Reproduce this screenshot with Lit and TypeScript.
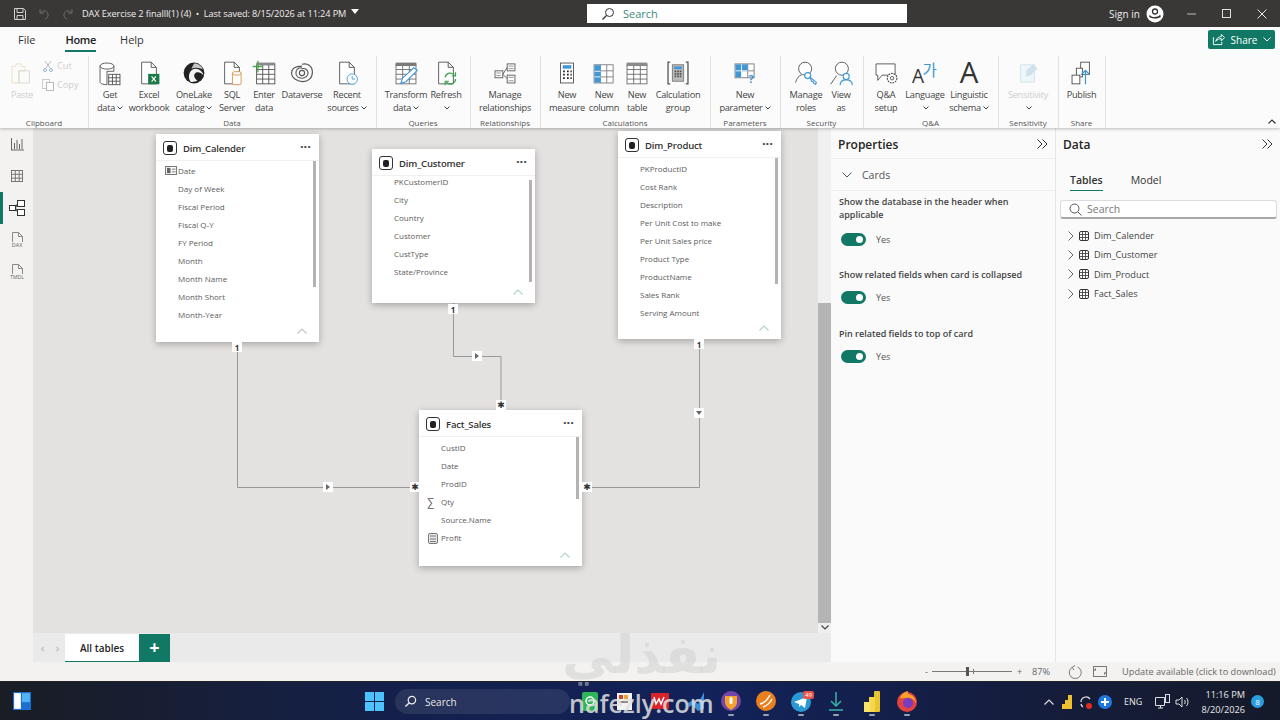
import {LitElement, css, html, svg} from 'lit'
import {customElement} from 'lit/decorators.js'

const S = '#4a4a4a'
const B = '#3f97d6'

// ribbon icons, all on a 30x30 box
const grid = (x: number, y: number, w: number, h: number, cols: number, rows: number, c = S) => 
{
    const lines = []
    for (let i = 1; i < cols; i++) lines.push(svg`<path d="M${x + (w * i) / cols} ${y}v${h}" stroke=${c} fill="none"/>`)
    for (let i = 1; i < rows; i++) lines.push(svg`<path d="M${x} ${y + (h * i) / rows}h${w}" stroke=${c} fill="none"/>`)
    return svg`<rect x=${x} y=${y} width=${w} height=${h} fill="#fff" stroke=${c}/>${lines}`
}
const doc = (c = S) => svg`<path d="M6.5 2.5h11l6 6v19h-17z M17.5 2.5v6h6" fill="#fff" stroke=${c}/>`

const ICONS: Record<string, unknown> = {
    paste: svg`<path d="M3.5 7.5h4l1-3h5l1 3h4v5h-7v14h-8z" fill="none" stroke="#ecdcb8"/><rect x="11.5" y="12.5" width="12" height="14" fill="none" stroke="#d5d5d5"/>`,
    getdata: svg`<path d="M3.5 7v18c0 2 3 3.500 8 3.500V13h8V7" fill="#fff" stroke=${S}/><ellipse cx="11.500" cy="7" rx="8" ry="3.500" fill="#fff" stroke=${S}/>${grid(13.5, 16.5, 13, 12, 3, 3)}`,
    excel: svg`${doc()}<rect x="14" y="16" width="13" height="12" fill="#1b7a45"/><path d="M18 19l5 6m0-6l-5 6" stroke="#fff" stroke-width="1.300"/>`,
    onelake: svg`<circle cx="15" cy="15" r="12" fill="#222"/><path d="M11 25c-4-6-1-15 6-15 5 0 9 5 9 8-3-4-8-5-10-2-2 2 0 6 3 8-3 1-6 2-8 1z" fill="#f4f4f4"/><path d="M15 4c4 0 9 2 10 7-3-2-9-3-13-1z" fill="#fff" opacity=".75"/>`,
    sql: svg`${doc()}<rect x="15.500" y="13.500" width="10" height="15" rx="2" fill="#fff" stroke="#d98a3c"/><path d="M15.500 16c2 2 8 2 10 0" fill="none" stroke="#d98a3c"/>`,
    enter: svg`${grid(6.5, 5.5, 21, 22, 3, 4)}<rect x="6" y="3" width="22" height="3" fill="#8a8a8a"/><path d="M8 1v13M2 7.500h12" stroke="#4ca84c" stroke-width="1.500"/>`,
    dataverse: svg`<g fill="none" stroke="#555" stroke-width="1.300"><path d="M15 5c6-2 12 2 12 9s-5 11-11 11S3 21 3 15 9 7 15 7"/><path d="M15 10c4-1 7 2 7 5s-3 6-7 6-7-2-7-6 3-6 7-6"/><circle cx="15" cy="15" r="3"/></g>`,
    recent: svg`${doc()}<circle cx="21" cy="22" r="6" fill="#fff" stroke=${B}/><path d="M21 18.500V22h3.500" fill="none" stroke=${B}/>`,
    transform: svg`${grid(3.5, 5.5, 23, 22, 3, 4, '#666')}<rect x="3" y="3" width="24" height="4" fill="#7a7a7a"/><path d="M9 27l2-6L24 9l4 3-13 13z" fill="#fff" stroke=${B} stroke-width="1.300"/>`,
    refresh: svg`${doc()}<path d="M14 20a6 6 0 0 1 11-2m1 4a6 6 0 0 1-11 3" fill="none" stroke="#3fa34d" stroke-width="1.500"/><path d="M26 14v4.500h-4.500M14 29v-4.500h4.500" fill="none" stroke="#3fa34d" stroke-width="1.300"/>`,
    rel: svg`<g fill="#fff" stroke="#555"><rect x="3.500" y="12.500" width="9" height="8"/><rect x="17.500" y="4.500" width="9" height="8"/><rect x="17.500" y="17.500" width="9" height="9"/></g><path d="M12.500 16.500l5-8M12.500 16.500l5 5" stroke="#555" fill="none"/><path d="M5 15h5M5 18h5M19 7h6M19 10h6M19 20h6M19 24h6" stroke="#888"/>`,
    measure: svg`<rect x="7.500" y="3.500" width="15" height="23" fill="#fff" stroke=${S}/><rect x="10" y="6" width="10" height="4" fill=${B}/><path d="M10.500 13h2m2.500 0h2m2 0h1.500M10.500 17h2m2.500 0h2m2 0h1.500M10.500 21h2m2.500 0h2m2 0h1.500" stroke="#222" stroke-width="2"/>`,
    column: svg`${grid(3.5, 5.5, 22, 21, 3, 3, '#777')}<rect x="4" y="6" width="7" height="20" fill=${B}/><path d="M4 13h7M4 19.500h7" stroke="#fff"/>`,
    table: svg`${grid(3.5, 5.5, 23, 22, 3, 4, '#666')}<rect x="3" y="3" width="24" height="4" fill="#8a8a8a"/>`,
    group: svg`<path d="M6 2.500H3.500v25H6M24 2.500h2.500v25H24" fill="none" stroke="#555" stroke-width="1.500"/><rect x="8.500" y="5.500" width="13" height="19" fill="#bbb" stroke="#777"/><rect x="10.500" y="7.500" width="9" height="3" fill=${B}/><path d="M11 13h8M11 16h8M11 19h8" stroke="#555" stroke-width="2" stroke-dasharray="2 1"/>`,
    param: svg`${grid(3.5, 4.5, 22, 16, 3, 2, '#777')}<rect x="4" y="5" width="14" height="7.500" fill=${B}/><rect x="4" y="12.500" width="7" height="7.500" fill=${B}/><path d="M4 12.500h14M11 5v15" stroke="#fff"/><text x="19" y="27" font-size="13" font-weight="700" fill=${B} font-family="Open Sans">?</text>`,
    roles: svg`<circle cx="14" cy="10" r="7.500" fill="#fff" stroke=${S}/><path d="M3 26c1-5 4-8 7-9" fill="none" stroke=${S}/><circle cx="17" cy="18" r="3.500" fill="#fff" stroke=${B} stroke-width="1.300"/><path d="M20 20l7 6-1 2-2-1-1-2-2-1z" fill="#fff" stroke=${B} stroke-width="1.300"/>`,
    viewas: svg`<circle cx="16" cy="10" r="7.500" fill="#fff" stroke=${S}/><path d="M3 28l7-10" fill="none" stroke=${S}/><circle cx="21" cy="19" r="3.500" fill="#fff" stroke=${B} stroke-width="1.300"/><path d="M14 29c0-4 3-6 7-6s7 2 7 6" fill="none" stroke=${B} stroke-width="1.300"/>`,
    qa: svg`<path d="M3.500 4.500h22v13h-15l-5 6v-6h-2z" fill="#fff" stroke=${S}/><circle cx="22" cy="21" r="5.500" fill="#fff" stroke=${S} stroke-dasharray="2 1" stroke-width="1.300"/><circle cx="22" cy="21" r="2" fill="#fff" stroke=${S}/>`,
    lang: svg`<text x="0" y="27" font-size="22" fill="#333" font-family="Open Sans">A</text><text x="12" y="19" font-size="18" fill=${B} font-family="Noto Sans CJK KR">가</text>`,
    ling: svg`<text x="15" y="27" text-anchor="middle" font-size="34" fill="#333" font-family="Open Sans">A</text>`,
    sens: svg`<path d="M6.500 5.500h16v20h-16z" fill="#eef6fa" stroke="#cfe2ec"/><path d="M13 12l8-7 5 5-8 8-5 1z" fill="#cfe2ec"/>`,
    publish: svg`<g fill="#fff" stroke=${S}><rect x="13.500" y="2.500" width="10" height="14"/><rect x="8.500" y="9.500" width="7" height="10"/><rect x="3.500" y="17.500" width="9" height="10"/></g><path d="M19 28V13m-5 4l5-5 5 5" fill="none" stroke=${B} stroke-width="1.400"/>`,
}

type Item = {w: number, icon: string, lines: string[], more?: boolean, dim?: boolean}
type Group = {label: string, w: number, items: Item[], small?: boolean}

const GROUPS: Group[] = [
    {label: 'Clipboard', w: 88, small: true, items: [{w: 44, icon: 'paste', lines: ['Paste'], dim: true}]},
    {label: 'Data', w: 288, items: [
        {w: 44, icon: 'getdata', lines: ['Get', 'data'], more: true},
        {w: 34, icon: 'excel', lines: ['Excel', 'workbook']},
        {w: 56, icon: 'onelake', lines: ['OneLake', 'catalog'], more: true},
        {w: 20, icon: 'sql', lines: ['SQL', 'Server']},
        {w: 44, icon: 'enter', lines: ['Enter', 'data']},
        {w: 32, icon: 'dataverse', lines: ['Dataverse']},
        {w: 58, icon: 'recent', lines: ['Recent', 'sources'], more: true},
    ]},
    {label: 'Queries', w: 94, items: [
        {w: 60, icon: 'transform', lines: ['Transform', 'data'], more: true},
        {w: 20, icon: 'refresh', lines: ['Refresh', ''], more: true},
    ]},
    {label: 'Relationships', w: 70, items: [{w: 70, icon: 'rel', lines: ['Manage', 'relationships']}]},
    {label: 'Calculations', w: 170, items: [
        {w: 54, icon: 'measure', lines: ['New', 'measure']},
        {w: 20, icon: 'column', lines: ['New', 'column']},
        {w: 46, icon: 'table', lines: ['New', 'table']},
        {w: 36, icon: 'group', lines: ['Calculation', 'group']},
    ]},
    {label: 'Parameters', w: 70, items: [{w: 70, icon: 'param', lines: ['New', 'parameter'], more: true}]},
    {label: 'Security', w: 83, items: [
        {w: 52, icon: 'roles', lines: ['Manage', 'roles']},
        {w: 18, icon: 'viewas', lines: ['View', 'as']},
    ]},
    {label: 'Q&A', w: 135, items: [
        {w: 46, icon: 'qa', lines: ['Q&A', 'setup']},
        {w: 32, icon: 'lang', lines: ['Language', ''], more: true},
        {w: 56, icon: 'ling', lines: ['Linguistic', 'schema'], more: true},
    ]},
    {label: 'Sensitivity', w: 60, items: [{w: 60, icon: 'sens', lines: ['Sensitivity', ''], more: true, dim: true}]},
    {label: 'Share', w: 47, items: [{w: 47, icon: 'publish', lines: ['Publish']}]},
]

type Card = {name: string, x: number, y: number, h: number, first: number, bar: [number, number], tint?: boolean, rows: string[]}

const CARDS: Card[] = [
    {name: 'Dim_Calender', x: 123, y: 6, h: 208, first: 28, bar: [27, 153], rows: ['Date', 'Day of Week', 'Fiscal Period', 'Fiscal Q-Y', 'FY Period', 'Month', 'Month Name', 'Month Short', 'Month-Year']},
    {name: 'Dim_Customer', x: 339, y: 21, h: 154, first: 24, bar: [31, 133], tint: true, rows: ['PKCustomerID', 'City', 'Country', 'Customer', 'CustType', 'State/Province']},
    {name: 'Dim_Product', x: 585, y: 3, h: 208, first: 29, bar: [27, 153], tint: true, rows: ['PKProductID', 'Cost Rank', 'Description', 'Per Unit Cost to make', 'Per Unit Sales price', 'Product Type', 'ProductName', 'Sales Rank', 'Serving Amount']},
    {name: 'Fact_Sales', x: 386, y: 282, h: 156, first: 29, bar: [27, 89], tint: true, rows: ['CustID', 'Date', 'ProdID', 'Qty', 'Source.Name', 'Profit']},
]

// relationship markers, in canvas coordinates
const MARKS: {x: number, y: number, kind: string}[] = [
    {x: 204, y: 219, kind: '1'},
    {x: 295, y: 359, kind: 'right'},
    {x: 382, y: 359, kind: '*'},
    {x: 420, y: 181, kind: '1'},
    {x: 444, y: 228, kind: 'right'},
    {x: 468, y: 277, kind: '*'},
    {x: 666, y: 216, kind: '1'},
    {x: 666, y: 285, kind: 'down'},
    {x: 554, y: 359, kind: '*'},
]

const SETTINGS = [
    {text: 'Show the database in the header when applicable', cls: 'two'},
    {text: 'Show related fields when card is collapsed', cls: 'one'},
    {text: 'Pin related fields to top of card', cls: 'one'},
]

const TABLES = ['Dim_Calender', 'Dim_Customer', 'Dim_Product', 'Fact_Sales']

const chevronDown = html`<svg class="more" viewBox="0 0 6 4" width="6" height="4"><path d="M.5.5L3 3 5.500.5" fill="none" stroke="#444"/></svg>`
const doubleChevron = html`<svg viewBox="0 0 11 10" width="11" height="10"><path d="M.5.500L5 5 .5 9.500M5.500.500L10 5 5.500 9.500" fill="none" stroke="#333"/></svg>`

const TASK_APPS = [
    svg`<rect x="3" y="2" width="16" height="19" rx="2" fill="#2fb457"/><circle cx="11" cy="11" r="4" fill="none" stroke="#fff" stroke-width="1.500"/>`,
    svg`<rect x="3" y="3" width="15" height="17" fill="#f2f2f2"/><rect x="5" y="5" width="4" height="4" fill="#d24726"/><rect x="10" y="5" width="4" height="4" fill="#e8a33d"/><rect x="5" y="11" width="9" height="2" fill="#888"/>`,
    svg`<rect x="2" y="3" width="18" height="16" rx="1" fill="#d8232a"/><path d="M5 7l2 7 3-5 2 5 3-7" fill="none" stroke="#fff" stroke-width="1.500"/>`,
    svg`<path d="M3 13l5-3 5 4 6-12v17l-6 2-6-6-3 2z" fill="#3b8fd6"/>`,
    svg`<circle cx="11" cy="11" r="10" fill="#7347a8"/><path d="M5 6h12v6c0 4-3 6-6 8-3-2-6-4-6-8z" fill="#f3a32d"/><rect x="9.500" y="7" width="3" height="7" rx="1.500" fill="#fff"/>`,
    svg`<circle cx="11" cy="11" r="10" fill="#e9801f"/><path d="M5 14c4-1 8-5 10-9M8 17c3-1 7-4 9-8" stroke="#fff" stroke-width="1.500" fill="none"/>`,
    svg`<circle cx="11" cy="12" r="10" fill="#2a98d2"/><path d="M4 12l13-5-2 11-4-3-2 2v-3z" fill="#fff"/>`,
    svg`<path d="M11 2v14m-5-5l5 5 5-5M4 20h14" fill="none" stroke="#35b4ad" stroke-width="1.500"/>`,
    svg`<rect x="13" y="1" width="6" height="21" rx="1" fill="#e8c52c"/><rect x="8" y="7" width="6" height="15" fill="#f2d84a"/><rect x="3" y="12" width="6" height="10" fill="#fbe26b"/>`,
    svg`<circle cx="11" cy="12" r="10" fill="#e2433f"/><circle cx="12" cy="13" r="5" fill="#7a3cc2"/><path d="M4 8c2-5 6-7 8-7-1 2 0 3 3 4 4 2 5 6 5 8-2-4-6-6-10-5-3 0-5 1-6 0z" fill="#f8a12e"/>`,
]

@customElement('model-card')
export class ModelCard extends LitElement 
{
    static properties = {card: {attribute: false}}
    declare card: Card

    fieldIcon(row: string) 
    {
        if (row === 'Date' && this.card.name === 'Dim_Calender') 
        {
            return html`<svg class="fi" viewBox="0 0 13 10" width="12" height="9"><rect x=".5" y=".5" width="12" height="9" fill="#fff" stroke="#666"/><rect x="2" y="2" width="4" height="6" fill="#666"/><path d="M7.500 3.500h4M7.500 6.500h4" stroke="#666"/></svg>`
        }
        if (row === 'Qty') 
        {
            return html`<span class="fi sigma">∑</span>`
        }
        if (row === 'Profit') 
        {
            return html`<svg class="fi" viewBox="0 0 10 11" width="10" height="11"><rect x=".5" y=".5" width="9" height="10" rx="1.500" fill="#e8e8e8" stroke="#777"/><path d="M2 3h6M2 6h6M2 8.500h6" stroke="#777"/></svg>`
        }
        return null
    }

    render() 
    {
        const c = this.card
        return html`
            <div class="head">
                <span class="db"><i></i></span>
                <span class="name">${c.name}</span>
                <span class="dots">···</span>
            </div>
            <div class="rows" style="padding-top:${c.first}px">
                ${c.rows.map(r => html`<div class="row">${this.fieldIcon(r)}${r}</div>`)}
            </div>
            <div class="bar" style="top:${c.bar[0]}px;height:${c.bar[1] - c.bar[0]}px"></div>
            <svg class="up" viewBox="0 0 10 6" width="10" height="6"><path d="M.5 5.500L5 1l4.500 4.500" fill="none" stroke=${c.tint ? '#b5d3cc' : '#c4c4c4'} stroke-width="1.200"/></svg>
        `
    }

    static styles = css`
        :host
        {
            display: block;
            position: absolute;
            width: 163px;
            background: #fff;
            box-shadow: 0 2px 7px rgba(0, 0, 0, .28);
            font-family: "Open Sans", sans-serif;
        }

        .head
        {
            display: flex;
            align-items: center;
            height: 27px;
            padding: 2px 8px 0 7px;
            border-bottom: 1px solid #f0f0f0;
            box-sizing: border-box;
        }

        .db
        {
            box-sizing: border-box;
            width: 14px;
            height: 14px;
            border: 1px solid #333;
            border-radius: 3px;
            display: flex;
            align-items: center;
            justify-content: center;
        }

        .db i
        {
            width: 6px;
            height: 7px;
            background: #222;
            border-radius: 2px;
        }

        .name
        {
            margin-left: 6px;
            font-size: 9.500px;
            letter-spacing: -.15px;
            font-weight: 600;
            color: #333;
            flex: 1;
        }

        .dots
        {
            font-size: 13px;
            font-weight: 700;
            color: #444;
            line-height: 10px;
            margin-top: -5px;
        }

        .rows
        {
            position: absolute;
            top: 0;
            left: 22px;
            right: 8px;
        }

        .row
        {
            position: relative;
            height: 18px;
            line-height: 18px;
            font-size: 8px;
            color: #5c5c5c;
            white-space: nowrap;
        }

        .fi
        {
            position: absolute;
            left: -13px;
            top: 4px;
        }

        .sigma
        {
            top: 0;
            left: -14px;
            font-size: 11px;
            color: #555;
        }

        .bar
        {
            position: absolute;
            right: 3px;
            width: 3px;
            background: #b3b3b3;
        }

        .up
        {
            position: absolute;
            right: 12px;
            bottom: 8px;
        }
    `
}

@customElement('app-root')
export class AppRoot extends LitElement 
{
    ribbonItem(it: Item) 
    {
        const last = it.lines.length - 1
        return html`
            <div class="item ${it.dim ? 'dim' : ''}" style="width:${it.w}px">
                <svg class="ri" viewBox="0 0 30 30" width="26" height="26">${ICONS[it.icon]}</svg>
                <div class="lbl">
                    ${it.lines.map((l, i) => html`<div>${l}${it.more && i === last ? chevronDown : ''}</div>`)}
                </div>
            </div>
        `
    }

    clipboardSmall() 
    {
        return html`
            <div class="smalls">
                <div><svg viewBox="0 0 12 12" width="12" height="12"><path d="M3 1l5 7M9 1L4 8" stroke="#bbb" fill="none"/><circle cx="3" cy="10" r="1.500" fill="none" stroke="#8fb7d9"/><circle cx="9" cy="10" r="1.500" fill="none" stroke="#8fb7d9"/></svg>Cut</div>
                <div><svg viewBox="0 0 12 12" width="12" height="12"><rect x=".5" y=".5" width="7" height="9" fill="none" stroke="#ccc"/><rect x="4.500" y="3.500" width="7" height="8" fill="#fff" stroke="#bbb"/></svg>Copy</div>
            </div>
        `
    }

    marker(m: {x: number, y: number, kind: string}) 
    {
        let inner: unknown = m.kind
        if (m.kind === '*') inner = html`<span class="star">✱</span>`
        if (m.kind === 'right') inner = html`<svg viewBox="0 0 6 6" width="6" height="6"><path d="M1 0l4 3-4 3z" fill="#666"/></svg>`
        if (m.kind === 'down') inner = html`<svg viewBox="0 0 6 6" width="6" height="6"><path d="M0 1l3 4 3-4z" fill="#666"/></svg>`
        return html`<div class="mark" style="left:${m.x - 5}px;top:${m.y - 5}px">${inner}</div>`
    }

    renderTitle() 
    {
        return html`
            <header class="title">
                <svg class="q" viewBox="0 0 14 14" width="14" height="14"><path d="M1.500 1.500h9l2 2v9h-11z M4 1.500v4h6v-4 M4 12.500v-4h6v4" fill="none" stroke="#cfcfcf"/></svg>
                <svg class="q" viewBox="0 0 14 14" width="14" height="14"><path d="M3 2v4h4M3 6c3-4 9-2 8 3-.5 2-2 3-3 3" fill="none" stroke="#6f6d6b"/></svg>
                <svg class="q" viewBox="0 0 14 14" width="14" height="14"><path d="M11 2v4H7M11 6C8 2 2 4 3 9c.5 2 2 3 3 3" fill="none" stroke="#6f6d6b"/></svg>
                <span class="doc">DAX Exercise 2 finalll(1) (4)&nbsp; •&nbsp; Last saved: 8/15/2026 at 11:24 PM</span>
                <svg class="caret" viewBox="0 0 8 5" width="8" height="5"><path d="M0 0h8L4 5z" fill="#fff"/></svg>
                <div class="tsearch">
                    <svg viewBox="0 0 14 14" width="14" height="14"><circle cx="8.500" cy="5.500" r="4" fill="none" stroke="#333"/><path d="M5.500 8.500L1.500 12.500" stroke="#333" stroke-width="1.200"/></svg>
                    <span>Search</span>
                </div>
                <span class="signin">Sign in</span>
                <svg class="user" viewBox="0 0 18 18" width="18" height="18"><circle cx="9" cy="9" r="8.500" fill="#fff"/><circle cx="9" cy="6.500" r="2.500" fill="none" stroke="#333" stroke-width="1.300"/><path d="M3.500 10.500c1 3 9 3 11 0" fill="none" stroke="#333" stroke-width="1.500"/></svg>
                <div class="win">
                    <svg viewBox="0 0 10 10" width="10" height="10"><path d="M0 5h9" stroke="#bbb"/></svg>
                    <svg viewBox="0 0 10 10" width="10" height="10"><rect x=".5" y=".5" width="8" height="8" fill="none" stroke="#ddd"/></svg>
                    <svg viewBox="0 0 10 10" width="10" height="10"><path d="M.5.500l9 9m0-9l-9 9" stroke="#eee"/></svg>
                </div>
            </header>
        `
    }

    renderRibbon() 
    {
        return html`
            <section class="ribbon">
                <div class="menus">
                    <span class="menu">File</span>
                    <span class="menu on">Home</span>
                    <span class="menu">Help</span>
                    <div class="share">
                        <svg viewBox="0 0 14 14" width="13" height="13"><path d="M1.500 4.500v8h9v-3M4 9c1-4 4-5 6-5V1.500L13.500 5 10 8.500V6C8 6 5.500 7 4 9z" fill="none" stroke="#fff"/></svg>
                        <span>Share</span>
                        <svg viewBox="0 0 8 5" width="8" height="5"><path d="M.5.500L4 4 7.500.5" fill="none" stroke="#fff"/></svg>
                    </div>
                </div>
                <div class="groups">
                    ${GROUPS.map(g => html`
                        <div class="group" style="width:${g.w}px">
                            <div class="items">
                                ${g.items.map(i => this.ribbonItem(i))}
                                ${g.small ? this.clipboardSmall() : ''}
                            </div>
                            <div class="glabel">${g.label}</div>
                        </div>
                    `)}
                    <svg class="collapse" viewBox="0 0 8 5" width="8" height="5"><path d="M.5 4.500L4 1l3.500 3.500" fill="none" stroke="#333" stroke-width="1.200"/></svg>
                </div>
            </section>
        `
    }

    renderRail() 
    {
        return html`
            <nav class="rail">
                <div class="ri-slot"><svg viewBox="0 0 14 14" width="14" height="14"><path d="M1.500 13V1M1 13h13M4.500 12V6M7 12V3M9.500 12V7M12 12V2" fill="none" stroke="#666"/></svg></div>
                <div class="ri-slot"><svg viewBox="0 0 14 14" width="14" height="12"><rect x=".5" y=".5" width="13" height="13" fill="none" stroke="#666"/><path d="M5 .5v13M9.500.5v13M.5 5h13M.5 9.500h13" stroke="#666"/></svg></div>
                <div class="ri-slot active"><svg viewBox="0 0 16 16" width="16" height="16"><g fill="#fff" stroke="#333"><rect x=".5" y="5.500" width="6" height="5"/><rect x="8.500" y=".5" width="7" height="6"/><rect x="8.500" y="9.500" width="7" height="6"/></g><path d="M6.500 8l2-4.500M6.500 8l2 4" stroke="#333" fill="none"/></svg></div>
                <div class="ri-slot"><svg viewBox="0 0 16 16" width="16" height="16"><path d="M3.500 10V.5h6l4 4V10M9.500.5v4h4" fill="none" stroke="#888"/><text x="8" y="15" font-size="5.500" text-anchor="middle" fill="#666" font-family="Open Sans">DAX</text></svg></div>
                <div class="ri-slot"><svg viewBox="0 0 16 16" width="16" height="16"><path d="M3.500 10V.5h6l4 4V10M9.500.5v4h4" fill="none" stroke="#888"/><text x="8" y="15" font-size="5" text-anchor="middle" fill="#666" font-family="Open Sans">TMDL</text></svg></div>
            </nav>
        `
    }

    renderCanvas() 
    {
        return html`
            <div class="mid">
                <div class="canvas-row">
                    <div class="canvas">
                        <svg class="lines" width="785" height="505" viewBox="0 0 785 505">
                            <path d="M204.500 214v145.500H386M420.500 175v53.500h47.500V282M666.500 211v148.500H549" fill="none" stroke="#999"/>
                        </svg>
                        ${CARDS.map(c => html`<model-card .card=${c} style="left:${c.x}px;top:${c.y}px;height:${c.h}px"></model-card>`)}
                        ${MARKS.map(m => this.marker(m))}
                    </div>
                    <div class="vscroll">
                        <div class="vthumb"></div>
                        <svg viewBox="0 0 8 5" width="8" height="5"><path d="M.5.500L4 4 7.500.5" fill="none" stroke="#444" stroke-width="1.200"/></svg>
                    </div>
                </div>
                <div class="tabs">
                    <span class="nav">‹</span><span class="nav">›</span>
                    <div class="tab">All tables</div>
                    <div class="plus">+</div>
                </div>
            </div>
        `
    }

    renderProperties() 
    {
        return html`
            <aside class="props">
                <div class="phead"><b>Properties</b>${doubleChevron}</div>
                <div class="cards">
                    <svg viewBox="0 0 10 6" width="10" height="6"><path d="M.5.500L5 5 9.500.5" fill="none" stroke="#555"/></svg>
                    <span>Cards</span>
                </div>
                ${SETTINGS.map(s => html`
                    <div class="setting ${s.cls}">
                        <div class="stext">${s.text}</div>
                        <div class="yes"><span class="toggle"><i></i></span>Yes</div>
                    </div>
                `)}
            </aside>
        `
    }

    renderData() 
    {
        return html`
            <aside class="data">
                <div class="phead"><b>Data</b>${doubleChevron}</div>
                <div class="dtabs"><span class="on">Tables</span><span>Model</span></div>
                <div class="dsearch">
                    <svg viewBox="0 0 13 13" width="13" height="13"><circle cx="5.500" cy="5.500" r="4.500" fill="none" stroke="#555"/><path d="M9 9l3.500 3.500" stroke="#555"/></svg>
                    <span>Search</span>
                </div>
                ${TABLES.map(t => html`
                    <div class="titem">
                        <svg viewBox="0 0 6 10" width="6" height="10"><path d="M.5.500L5 5 .5 9.500" fill="none" stroke="#666"/></svg>
                        <svg viewBox="0 0 10 10" width="10" height="10"><rect x=".5" y=".5" width="9" height="9" rx="1.500" fill="none" stroke="#333"/><path d="M3.500.5v9M6.500.5v9M.5 3.500h9M.5 6.500h9" stroke="#333" stroke-width=".8"/></svg>
                        <span>${t}</span>
                    </div>
                `)}
            </aside>
        `
    }

    renderStatus() 
    {
        return html`
            <footer class="status">
                <span class="zm">-</span>
                <div class="slider"><i></i><u></u></div>
                <span class="zm">+</span>
                <span class="pct">87%</span>
                <svg viewBox="0 0 14 14" width="14" height="14"><path d="M4 2.500a6 6 0 1 0 5.500-.5M7 .5L4 2.500 6 5" fill="none" stroke="#777"/></svg>
                <svg class="fit" viewBox="0 0 14 11" width="14" height="11"><rect x=".5" y=".5" width="13" height="10" fill="none" stroke="#777"/><path d="M3 3H2v2M11 8h1V6" fill="none" stroke="#555"/></svg>
                <span class="upd">Update available (click to download)</span>
            </footer>
        `
    }

    renderTaskbar() 
    {
        return html`
            <footer class="taskbar">
                <svg class="widget" viewBox="0 0 16 16" width="18" height="18"><rect x="0" y="0" width="16" height="16" fill="#1c6fd0"/><rect x="1" y="1" width="6" height="14" fill="#fff"/><rect x="8" y="1" width="7" height="8" fill="#52b4f2"/></svg>
                <svg class="start" viewBox="0 0 19 19" width="19" height="19"><path d="M0 0h9v9H0zM10 0h9v9h-9zM0 10h9v9H0zM10 10h9v9h-9z" fill="#4cc2ff"/></svg>
                <div class="tb-search">
                    <svg viewBox="0 0 14 14" width="13" height="13"><circle cx="8.500" cy="5.500" r="4" fill="none" stroke="#eee" stroke-width="1.300"/><path d="M5.500 8.500L1.500 12.500" stroke="#eee" stroke-width="1.500"/></svg>
                    <span>Search</span>
                </div>
                <div class="apps">
                    ${TASK_APPS.map((a, i) => html`<div class="app ${i > 3 ? 'open' : ''}"><svg viewBox="0 0 22 22" width="22" height="22">${a}</svg></div>`)}
                    <b class="badge">49</b>
                </div>
                <div class="tray">
                    <svg viewBox="0 0 10 6" width="10" height="6"><path d="M.5 5.500L5 1l4.500 4.500" fill="none" stroke="#ddd" stroke-width="1.200"/></svg>
                    <svg class="t-pbi" viewBox="0 0 10 14" width="10" height="14"><path d="M6 0h4v14H6zM3 5h3v9H3zM0 9h3v5H0z" fill="#eec22e"/></svg>
                    <svg class="t-sync" viewBox="0 0 14 16" width="14" height="16"><path d="M2 8a5 5 0 0 1 9-3M4 13a5 5 0 0 1-2-3" fill="none" stroke="#ddd" stroke-width="1.300"/><circle cx="10" cy="12" r="3" fill="#e02b20"/></svg>
                    <svg class="t-plus" viewBox="0 0 14 14" width="14" height="14"><circle cx="7" cy="7" r="7" fill="#1f78e0"/><path d="M7 3v8M3 7h8" stroke="#fff" stroke-width="2"/></svg>
                    <span class="eng">ENG</span>
                    <svg class="t-mon" viewBox="0 0 16 16" width="16" height="16"><path d="M.5 3.500h9v8h-9zM3 14h5M5.500 11.500V14" fill="none" stroke="#ddd"/><rect x="10.500" y=".5" width="4" height="8" fill="#17203c" stroke="#ddd"/></svg>
                    <svg class="t-vol" viewBox="0 0 16 14" width="16" height="14"><path d="M1 5v4h3l3 3V2L4 5zM9.500 5a3 3 0 0 1 0 4M11.500 3a6 6 0 0 1 0 8" fill="none" stroke="#ddd"/></svg>
                    <div class="clock"><div>11:16 PM</div><div>8/20/2026</div></div>
                    <span class="notif">8</span>
                </div>
            </footer>
        `
    }

    render() 
    {
        return html`
            ${this.renderTitle()}
            ${this.renderRibbon()}
            <main class="body">
                ${this.renderRail()}
                ${this.renderCanvas()}
                ${this.renderProperties()}
                ${this.renderData()}
            </main>
            ${this.renderStatus()}
            ${this.renderTaskbar()}
            <div class="mark-ar">نفذلي</div>
            <div class="mark-en">nafezly.com</div>
        `
    }

    static styles = css`
        :host
        {
            display: flex;
            flex-direction: column;
            position: relative;
            width: 1280px;
            height: 720px;
            overflow: hidden;
            font-family: "Open Sans", sans-serif;
            color: #333;
            background: #f3f2f1;
        }

        .title
        {
            height: 27px;
            flex: none;
            background: #3a3836;
            display: flex;
            align-items: center;
            position: relative;
            padding-left: 13px;
            color: #eee;
        }

        .q
        {
            margin-right: 10px;
        }

        .doc
        {
            font-size: 9.200px;
            margin-left: -3px;
            letter-spacing: -.1px;
            white-space: nowrap;
        }

        .caret
        {
            margin: -4px 0 0 5px;
        }

        .tsearch
        {
            position: absolute;
            left: 587px;
            top: 4px;
            width: 320px;
            height: 19px;
            background: #fff;
            display: flex;
            align-items: center;
            padding-left: 14px;
            box-sizing: border-box;
            gap: 8px;
            color: #3d8a78;
            font-size: 11px;
        }

        .signin
        {
            position: absolute;
            left: 1109px;
            top: 7px;
            font-size: 10px;
        }

        .user
        {
            position: absolute;
            left: 1146px;
            top: 5px;
        }

        .win
        {
            position: absolute;
            left: 1187px;
            top: 9px;
            display: flex;
            gap: 25px;
        }

        .ribbon
        {
            height: 101px;
            flex: none;
            background: #fbfbfb;
            box-shadow: 0 1px 3px rgba(0, 0, 0, .25);
            position: relative;
            z-index: 2;
        }

        .menus
        {
            height: 25px;
            display: flex;
            position: relative;
            align-items: flex-start;
            padding-left: 18px;
            font-size: 11px;
        }

        .menu
        {
            margin-right: 24px;
            height: 25px;
            line-height: 26px;
            box-sizing: border-box;
            color: #333;
        }

        .menu:first-child
        {
            margin-right: 30px;
        }

        .menu.on
        {
            font-weight: 600;
            letter-spacing: -.3px;
            color: #222;
            border-bottom: 2px solid #117865;
        }

        .share
        {
            position: absolute;
            left: 1208px;
            top: 3px;
            width: 67px;
            height: 19px;
            background: #117865;
            border-radius: 2px;
            color: #fff;
            font-size: 10px;
            display: flex;
            align-items: center;
            justify-content: center;
            gap: 6px;
        }

        .groups
        {
            display: flex;
            height: 76px;
            position: relative;
        }

        .group
        {
            box-sizing: border-box;
            position: relative;
            display: flex;
            flex-direction: column;
            flex: none;
            margin-top: 4px;
            height: 72px;
        }

        .group::after
        {
            content: "";
            position: absolute;
            top: 0;
            bottom: 0;
            right: -1px;
            width: 1px;
            background: #e1e0de;
        }

        .items
        {
            display: flex;
            flex: 1;
        }

        .item
        {
            flex: none;
            display: flex;
            flex-direction: column;
            align-items: center;
            font-size: 9.200px;
            letter-spacing: -.25px;
            color: #444;
        }

        .item .ri
        {
            flex: none;
            margin-top: 4px;
            overflow: visible;
        }

        .lbl
        {
            margin-top: 2px;
            text-align: center;
            line-height: 13px;
            white-space: nowrap;
            display: flex;
            flex-direction: column;
            align-items: center;
        }

        .lbl div
        {
            min-height: 13px;
        }

        .more
        {
            margin-left: 2px;
            vertical-align: 1px;
        }

        .dim
        {
            color: #cfcfcf;
        }

        .smalls
        {
            font-size: 9.200px;
            color: #cdcdcd;
            display: flex;
            flex-direction: column;
            gap: 6px;
            padding-top: 3px;
            margin-left: -2px;
        }

        .smalls div
        {
            display: flex;
            align-items: center;
            gap: 3px;
        }

        .glabel
        {
            text-align: center;
            font-size: 8px;
            line-height: 11px;
            color: #555;
            white-space: nowrap;
        }

        .collapse
        {
            position: absolute;
            left: 1268px;
            top: 67px;
        }

        .body
        {
            flex: 1;
            display: flex;
            min-height: 0;
        }

        .rail
        {
            width: 33px;
            flex: none;
            background: #f3f2f1;
        }

        .ri-slot
        {
            box-sizing: border-box;
            height: 32px;
            display: flex;
            align-items: center;
            justify-content: center;
        }

        .ri-slot.active
        {
            border-left: 3px solid #117865;
            padding-right: 3px;
        }

        .mid
        {
            width: 798px;
            flex: none;
            display: flex;
            flex-direction: column;
        }

        .canvas-row
        {
            flex: 1;
            display: flex;
            min-height: 0;
        }

        .canvas
        {
            position: relative;
            flex: 1;
            background: #e3e2e0;
            overflow: hidden;
        }

        .lines
        {
            position: absolute;
            left: 0;
            top: 0;
        }

        .mark
        {
            position: absolute;
            box-sizing: border-box;
            width: 10px;
            height: 10px;
            background: #fff;
            display: flex;
            align-items: center;
            justify-content: center;
            font-size: 8px;
            font-weight: 700;
            color: #333;
            z-index: 1;
        }

        .star
        {
            font-family: "DejaVu Sans", sans-serif;
            font-size: 9px;
            font-weight: 400;
        }

        .vscroll
        {
            width: 13px;
            flex: none;
            background: #f0f0f0;
            display: flex;
            flex-direction: column;
            align-items: center;
            justify-content: flex-end;
            padding-bottom: 3px;
            box-sizing: border-box;
            gap: 2px;
        }

        .vthumb
        {
            width: 13px;
            height: 320px;
            background: #b4b4b4;
        }

        .tabs
        {
            height: 29px;
            flex: none;
            background: #eaeaea;
            display: flex;
            align-items: flex-start;
            padding-left: 2px;
        }

        .nav
        {
            width: 15px;
            text-align: center;
            color: #c4c4c4;
            font-size: 11px;
            line-height: 29px;
            font-weight: 700;
        }

        .tab
        {
            width: 74px;
            height: 28px;
            margin-top: 1px;
            box-sizing: border-box;
            background: #fff;
            border-bottom: 1px solid #117865;
            text-align: center;
            font-size: 10px;
            font-weight: 600;
            line-height: 28px;
            color: #222;
        }

        .plus
        {
            width: 31px;
            height: 28px;
            margin-top: 1px;
            background: #117865;
            color: #fff;
            text-align: center;
            font-size: 18px;
            line-height: 26px;
            font-weight: 700;
        }

        .props, .data
        {
            flex: none;
            background: #fafafa;
            box-sizing: border-box;
            padding-top: 2px;
        }

        .props
        {
            width: 225px;
            border-right: 1px solid #e6e6e6;
        }

        .data
        {
            width: 224px;
        }

        .phead
        {
            height: 28px;
            display: flex;
            align-items: center;
            justify-content: space-between;
            padding: 0 7px 0 7px;
            font-size: 12px;
            border-bottom: 1px solid #efefef;
            color: #252423;
        }

        .data .phead
        {
            border-bottom: none;
        }

        .phead b
        {
            font-weight: 600;
        }

        .cards
        {
            height: 32px;
            display: flex;
            align-items: center;
            padding-left: 11px;
            gap: 10px;
            font-size: 10.500px;
            color: #555;
            border-bottom: 1px solid #efefef;
            box-sizing: border-box;
        }

        .setting
        {
            padding-left: 8px;
            font-size: 9px;
            font-weight: 600;
            color: #444;
            box-sizing: border-box;
        }

        .stext
        {
            line-height: 13px;
            width: 190px;
        }

        .setting.two
        {
            padding-top: 4px;
            height: 77px;
        }

        .setting.one
        {
            height: 59px;
        }

        .setting.two .yes
        {
            margin-top: 12px;
        }

        .yes
        {
            display: flex;
            align-items: center;
            gap: 10px;
            font-weight: 400;
            font-size: 9px;
            color: #555;
            margin-top: 10px;
            margin-left: 2px;
        }

        .toggle
        {
            box-sizing: border-box;
            width: 25px;
            height: 13px;
            border-radius: 7px;
            background: #117865;
            display: flex;
            align-items: center;
            justify-content: flex-end;
            padding-right: 3px;
        }

        .toggle i
        {
            width: 7px;
            height: 7px;
            border-radius: 50%;
            background: #fff;
        }

        .dtabs
        {
            display: flex;
            gap: 28px;
            padding: 14px 0 0 14px;
            font-size: 10.500px;
            height: 22px;
            margin-top: -1px;
        }

        .dtabs span
        {
            height: 20px;
            line-height: 18px;
            box-sizing: border-box;
        }

        .dtabs .on
        {
            font-weight: 600;
            border-bottom: 1.500px solid #117865;
        }

        .dsearch
        {
            margin: 7px 0 7px 4px;
            width: 217px;
            height: 19px;
            background: #fff;
            border: 1px solid #dcdcdc;
            border-bottom: 2px solid #a8a8a8;
            border-radius: 3px;
            box-sizing: border-box;
            display: flex;
            align-items: center;
            gap: 5px;
            padding-left: 8px;
            font-size: 10.500px;
            color: #777;
        }

        .titem
        {
            height: 19.300px;
            display: flex;
            align-items: center;
            padding-left: 12px;
            font-size: 9.200px;
            color: #444;
            gap: 5px;
        }

        .status
        {
            height: 19px;
            flex: none;
            background: #f3f2f1;
            display: flex;
            align-items: center;
            padding-left: 925px;
            box-sizing: border-box;
            font-size: 9.200px;
            color: #666;
        }

        .zm
        {
            width: 6px;
        }

        .slider
        {
            width: 80px;
            height: 1px;
            background: #777;
            margin: 0 5px 0 1px;
            position: relative;
        }

        .slider i
        {
            position: absolute;
            left: 34px;
            top: -4px;
            width: 3px;
            height: 9px;
            background: #555;
        }

        .slider u
        {
            position: absolute;
            left: 41px;
            top: -2px;
            width: 1px;
            height: 5px;
            background: #777;
        }

        .pct
        {
            margin: 0 18px 0 9px;
        }

        .fit
        {
            margin-left: 11px;
        }

        .upd
        {
            margin-left: 15px;
            white-space: nowrap;
        }

        .taskbar
        {
            height: 39px;
            flex: none;
            box-sizing: border-box;
            display: flex;
            align-items: center;
            position: relative;
            background: linear-gradient(90deg, #1a1d24 0%, #14204a 30%, #12225a 55%, #151d3d 80%, #151a2a 100%);
            border-top: 1px solid #222;
            color: #e8e8e8;
        }

        .widget
        {
            position: absolute;
            left: 13px;
            top: 10px;
        }

        .start
        {
            position: absolute;
            left: 365px;
            top: 10px;
        }

        .tb-search
        {
            position: absolute;
            left: 395px;
            top: 7px;
            width: 175px;
            height: 25px;
            border-radius: 13px;
            background: rgba(255, 255, 255, .09);
            display: flex;
            align-items: center;
            gap: 8px;
            padding-left: 9px;
            box-sizing: border-box;
            font-size: 10px;
        }

        .apps
        {
            position: absolute;
            left: 579px;
            top: 8px;
            display: flex;
            gap: 13.200px;
        }

        .app
        {
            width: 22px;
            height: 22px;
            position: relative;
        }

        .app.open::after
        {
            content: "";
            position: absolute;
            left: 8px;
            top: 24px;
            width: 6px;
            height: 2px;
            border-radius: 1px;
            background: #9aa0ac;
        }

        .badge
        {
            position: absolute;
            left: 224px;
            top: 1px;
            background: #e5534b;
            color: #fff;
            font-size: 6px;
            padding: 0 2px;
            border-radius: 2px;
            font-weight: 400;
        }

        .tray
        {
            position: absolute;
            left: 1044px;
            top: 0;
            height: 39px;
            display: flex;
            align-items: center;
            font-size: 9px;
        }

        .t-pbi
        {
            margin-left: 8px;
        }

        .t-sync
        {
            margin-left: 7px;
        }

        .t-plus
        {
            margin-left: 5px;
        }

        .eng
        {
            margin-left: 12px;
            width: 17px;
        }

        .t-mon
        {
            margin-left: 14px;
        }

        .t-vol
        {
            margin-left: 4px;
        }

        .clock
        {
            margin-left: 10px;
            width: 44px;
            text-align: right;
            font-size: 9.200px;
            line-height: 15px;
            white-space: nowrap;
        }

        .notif
        {
            width: 13px;
            height: 13px;
            border-radius: 50%;
            background: #2a9ee0;
            color: #fff;
            font-size: 8px;
            line-height: 13px;
            text-align: center;
            margin-left: 6px;
        }

        .mark-ar
        {
            position: absolute;
            left: 562px;
            top: 622px;
            font-family: "DejaVu Sans", sans-serif;
            font-size: 52px;
            font-weight: 700;
            line-height: 66px;
            color: rgba(205, 205, 205, .5);
            direction: rtl;
            pointer-events: none;
        }

        .mark-en
        {
            position: absolute;
            left: 569px;
            top: 688px;
            font-family: "Open Sans", sans-serif;
            font-size: 25px;
            line-height: 30px;
            font-weight: 600;
            color: rgba(225, 225, 225, .85);
            pointer-events: none;
        }
    `
}
